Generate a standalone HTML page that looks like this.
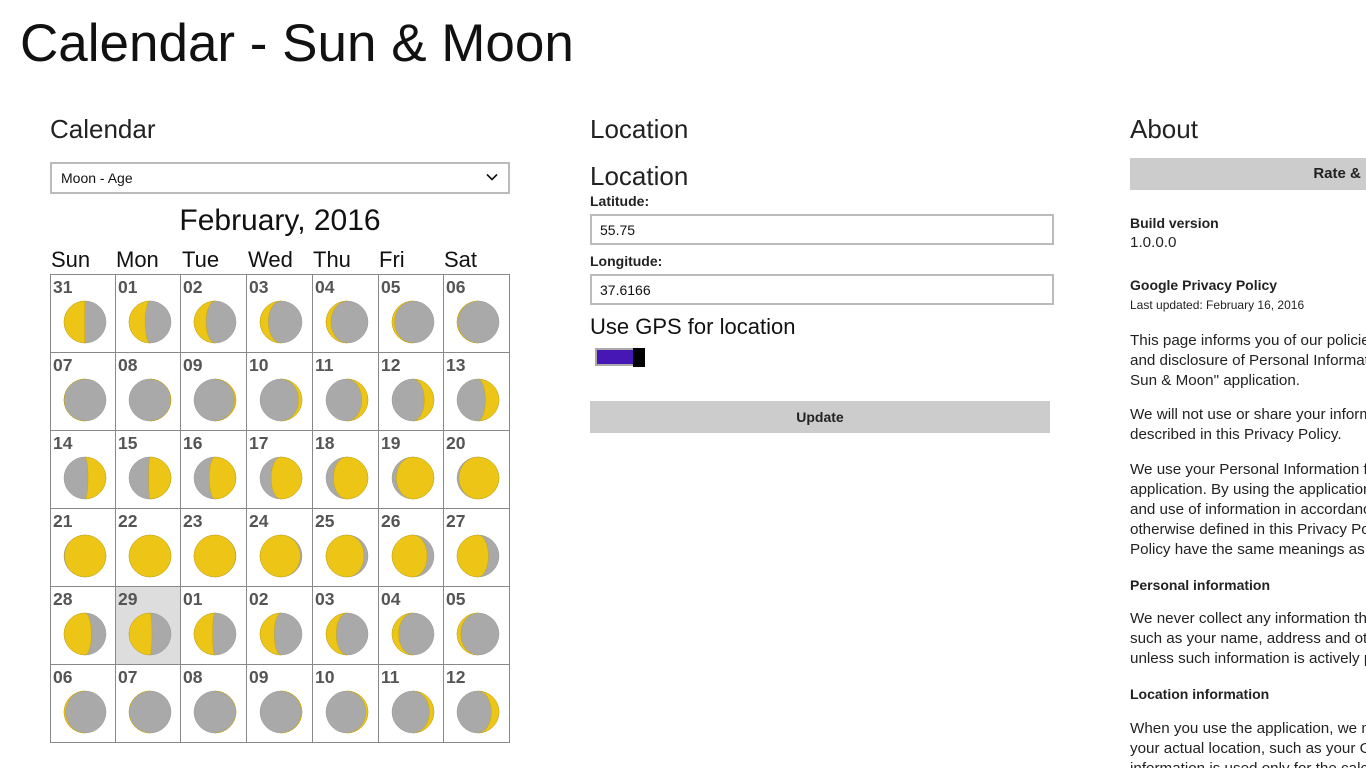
<!DOCTYPE html>
<html><head><meta charset="utf-8"><style>
*{margin:0;padding:0;box-sizing:border-box}
body{width:1366px;height:768px;overflow:hidden;background:#fff;font-family:"Liberation Sans",sans-serif;color:#111;position:relative}
.a{position:absolute;white-space:nowrap}
.h{font-size:26px;color:#222}
.t{font-size:14px;color:#222;line-height:20px}
.r{font-size:15.2px}
.b{font-weight:bold}
.inp{position:absolute;border:2px solid #bbb;background:#fff;font-size:14px;padding:6px 8px;color:#111}
#grid{position:absolute;left:50px;top:274px;width:460px;height:469px;border-left:1px solid #888;border-top:1px solid #888}
.cell{position:absolute;border-right:1px solid #888;border-bottom:1px solid #888}
.cell span{position:absolute;left:2px;top:2px;font-weight:bold;font-size:17.5px;color:#555}
.cell svg{position:absolute;left:11px;top:24px}
#about{position:absolute;left:0;top:0;width:1366px;height:768px;overflow:hidden}
</style></head><body>
<div class="a" style="left:20px;top:13px;font-size:53px;color:#111">Calendar - Sun &amp; Moon</div>

<div class="a h" style="left:50px;top:114px">Calendar</div>
<div class="inp" style="left:50px;top:162px;width:460px;height:32px;padding:6px 9px">Moon - Age
<svg style="position:absolute;right:10px;top:9px" width="12" height="8" viewBox="0 0 12 8"><path d="M1 1.5L6 6.5L11 1.5" stroke="#111" stroke-width="1.6" fill="none"/></svg></div>
<div class="a" style="left:50px;width:460px;text-align:center;top:204px;font-size:30px;color:#111">February, 2016</div>
<div class="a" style="left:51px;top:247px;font-size:22px">Sun</div>
<div class="a" style="left:116px;top:247px;font-size:22px">Mon</div>
<div class="a" style="left:182px;top:247px;font-size:22px">Tue</div>
<div class="a" style="left:248px;top:247px;font-size:22px">Wed</div>
<div class="a" style="left:313px;top:247px;font-size:22px">Thu</div>
<div class="a" style="left:379px;top:247px;font-size:22px">Fri</div>
<div class="a" style="left:444px;top:247px;font-size:22px">Sat</div>
<div id="grid"></div>

<div class="a h" style="left:590px;top:114px">Location</div>
<div class="a h" style="left:590px;top:161px">Location</div>
<div class="a t b" style="left:590px;top:191px">Latitude:</div>
<div class="inp" style="left:590px;top:214px;width:464px;height:31px">55.75</div>
<div class="a t b" style="left:590px;top:251px">Longitude:</div>
<div class="inp" style="left:590px;top:274px;width:464px;height:31px">37.6166</div>
<div class="a" style="left:590px;top:314px;font-size:22px;color:#111">Use GPS for location</div>
<div class="a" style="left:595px;top:348px;width:40px;height:18px;border:2px solid #aaa;background:#4617b4"></div>
<div class="a" style="left:633px;top:348px;width:12px;height:19px;background:#000"></div>
<div class="a" style="left:590px;top:401px;width:460px;height:32px;background:#ccc;font-size:14px;font-weight:bold;color:#222;text-align:center;line-height:32px">Update</div>

<div id="about">
<div class="a h" style="left:1130px;top:114px">About</div>
<div class="a" style="left:1130px;top:158px;width:470px;height:32px;background:#ccc;font-size:15px;font-weight:bold;color:#222;text-align:center;line-height:32px">Rate &amp; Review</div>
<div class="a t b" style="left:1130px;top:213px">Build version</div>
<div class="a t r" style="left:1130px;top:233px">1.0.0.0</div>
<div class="a t b" style="left:1130px;top:275px">Google Privacy Policy</div>
<div class="a" style="left:1130px;top:298px;font-size:12px;color:#222">Last updated: February 16, 2016</div>
<div class="a t r" style="left:1130px;top:331px">This page informs you of our policies regarding the collection, use<br>and disclosure of Personal Information we receive from "Calendar -<br>Sun &amp; Moon" application.</div>
<div class="a t r" style="left:1130px;top:405px">We will not use or share your information with anyone except as<br>described in this Privacy Policy.</div>
<div class="a t r" style="left:1130px;top:460px">We use your Personal Information for providing and improving the<br>application. By using the application, you agree to the collection<br>and use of information in accordance with this policy. Unless<br>otherwise defined in this Privacy Policy, terms used in this Privacy<br>Policy have the same meanings as in our Terms and Conditions.</div>
<div class="a t b" style="left:1130px;top:575px">Personal information</div>
<div class="a t r" style="left:1130px;top:609px">We never collect any information that can identify you personally,<br>such as your name, address and other contact details<br>unless such information is actively provided by you.</div>
<div class="a t b" style="left:1130px;top:684px">Location information</div>
<div class="a t r" style="left:1130px;top:719px">When you use the application, we may collect information about<br>your actual location, such as your GPS coordinates. This<br>information is used only for the calculations.</div>
</div>

<script>
var xs=[0,65,130,196,262,328,393,459],ys=[0,78,156,234,312,390,468];
var g=document.getElementById('grid'),h='';
var labels=[31,1,2,3,4,5,6,7,8,9,10,11,12,13,14,15,16,17,18,19,20,21,22,23,24,25,26,27,28,29,1,2,3,4,5,6,7,8,9,10,11,12];
for(var i=0;i<42;i++){
 var c=i%7,r=Math.floor(i/7);
 var d=i-7.3;
 var p=((d/29.53)%1+1)%1;
 var R=21,cx=23,cy=23;
 var rx=Math.abs(Math.cos(2*Math.PI*p))*R;
 var path;
 if(p<0.5){var s=p<0.25?0:1;
  path='M'+cx+' '+(cy-R)+'A'+R+' '+R+' 0 0 1 '+cx+' '+(cy+R)+'A'+rx.toFixed(2)+' '+R+' 0 0 '+s+' '+cx+' '+(cy-R)+'Z';}
 else{var s=p<0.75?0:1;
  path='M'+cx+' '+(cy-R)+'A'+R+' '+R+' 0 0 0 '+cx+' '+(cy+R)+'A'+rx.toFixed(2)+' '+R+' 0 0 '+s+' '+cx+' '+(cy-R)+'Z';}
 var lab=(labels[i]<10?'0':'')+labels[i];
 var bg=(i==29)?'background:#ddd;':'';
 h+='<div class="cell" style="'+bg+'left:'+xs[c]+'px;top:'+ys[r]+'px;width:'+(xs[c+1]-xs[c])+'px;height:'+(ys[r+1]-ys[r])+'px"><span>'+lab+'</span><svg width="46" height="46"><circle cx="23" cy="23" r="21" fill="#a9a9a9" stroke="#999" stroke-width="0.5"/><path d="'+path+'" fill="#ecc516" stroke="#c9a60c" stroke-width="0.5"/></svg></div>';
}
g.innerHTML=h;
</script>
</body></html>
